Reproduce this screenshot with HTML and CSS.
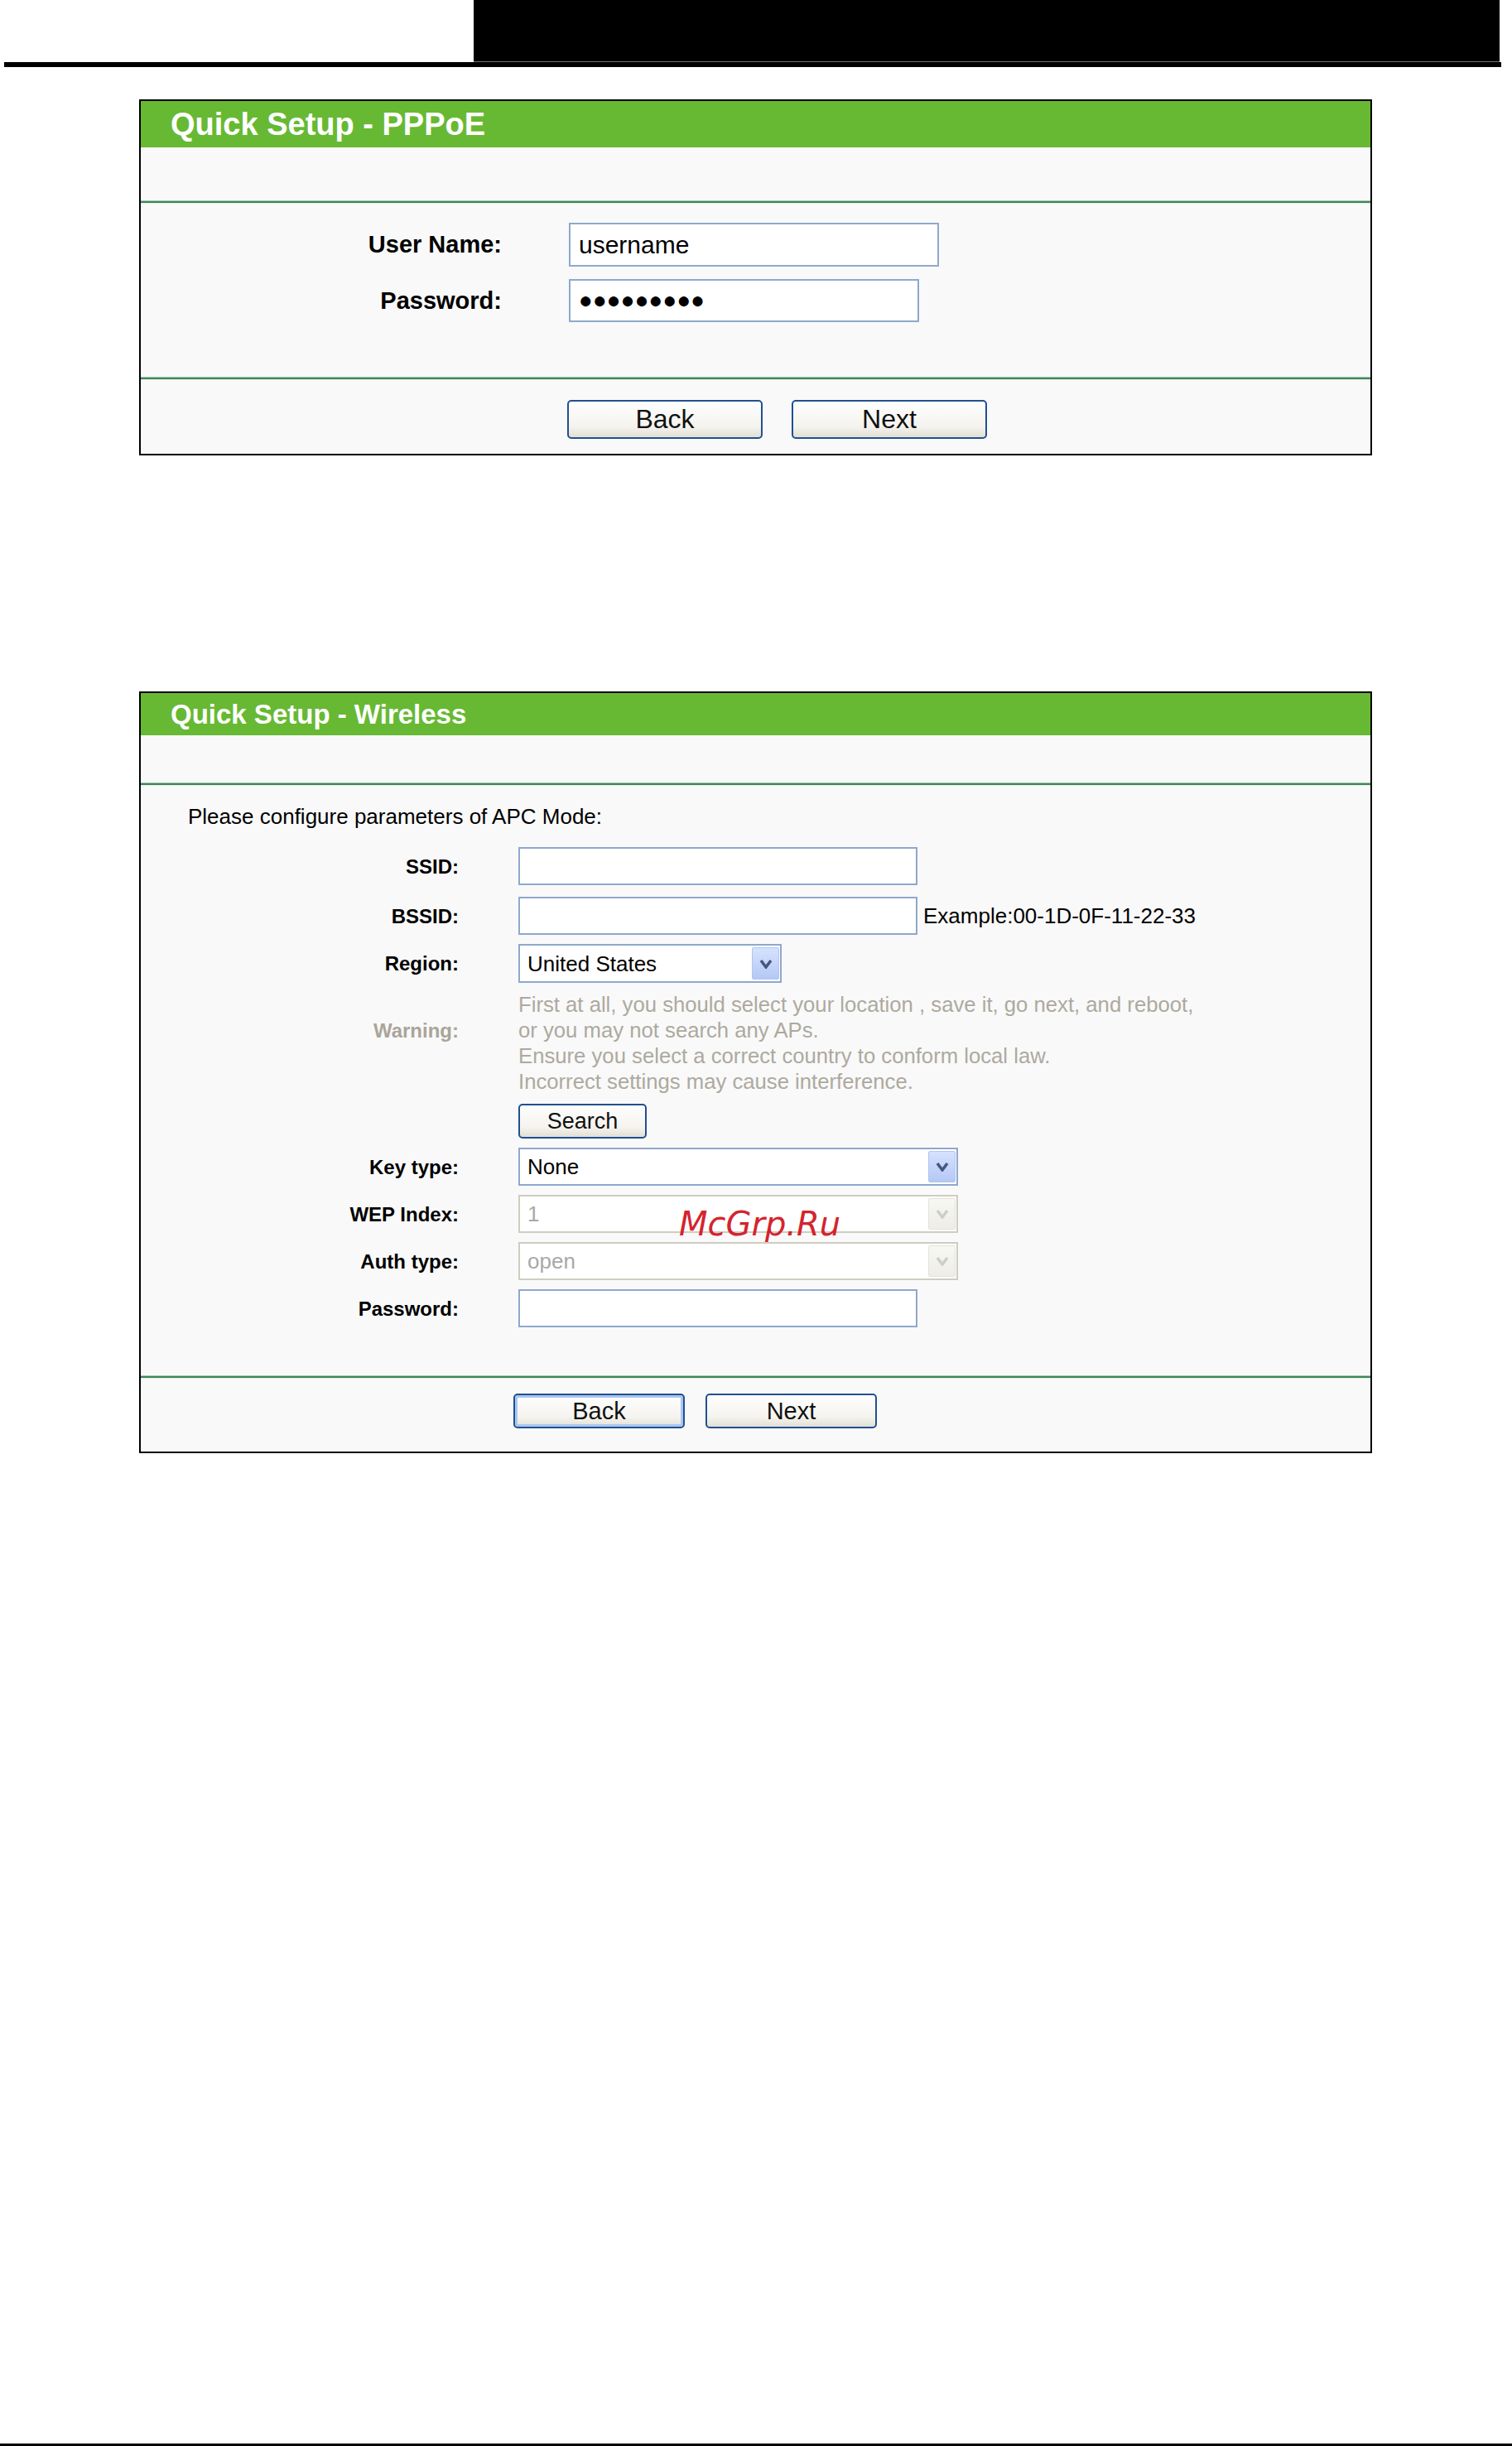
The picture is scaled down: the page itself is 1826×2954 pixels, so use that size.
FILE: index.html
```html
<!DOCTYPE html>
<html>
<head>
<meta charset="UTF-8">
<title>Quick Setup</title>
<link rel="stylesheet" href="styles.css">
</head>
<body>
<div class="page">

	<div class="top">
		<div class="top-box"></div>
	</div>

	<!-- PPPoE -->
	<div class="panel panel-pppoe">
		<h2 class="head">Quick Setup - PPPoE</h2>
		<div class="blank"></div>
		<div class="rule"></div>
		<div class="body">
			<div class="row">
				<label class="lbl">User Name:</label>
				<input class="field field-user" type="text" value="username">
			</div>
			<div class="row">
				<label class="lbl">Password:</label>
				<input class="field field-pass" type="text" value="●●●●●●●●●" readonly>
			</div>
		</div>
		<div class="rule"></div>
		<div class="foot">
			<button class="btn">Back</button>
			<button class="btn">Next</button>
		</div>
	</div>

	<!-- Wireless -->
	<div class="panel panel-wl">
		<h2 class="head">Quick Setup - Wireless</h2>
		<div class="blank"></div>
		<div class="rule"></div>
		<div class="body">
			<p class="intro">Please configure parameters of APC Mode:</p>
			<div class="row">
				<label class="lbl">SSID:</label>
				<input class="field field-wide" type="text">
			</div>
			<div class="row row-bssid">
				<label class="lbl">BSSID:</label>
				<input class="field field-wide" type="text">
				<span class="hint">Example:00-1D-0F-11-22-33</span>
			</div>
			<div class="row">
				<label class="lbl">Region:</label>
				<div class="select select-region">
					<select><option>United States</option></select>
					<span class="arrow"><svg width="16" height="12" viewBox="0 0 16 12"><polyline points="2,2 8,10 14,2" fill="none" stroke="#46587f" stroke-width="3.5"/></svg></span>
				</div>
			</div>
			<div class="row row-warn">
				<label class="lbl lbl-warn">Warning:</label>
				<div class="warn">
					First at all, you should select your location , save it, go next, and reboot,<br>
					or you may not search any APs.<br>
					Ensure you select a correct country to conform local law.<br>
					Incorrect settings may cause interference.
				</div>
			</div>
			<div class="row">
				<span class="lbl"></span>
				<button class="btn btn-search">Search</button>
			</div>
			<div class="row">
				<label class="lbl">Key type:</label>
				<div class="select">
					<select><option>None</option></select>
					<span class="arrow"><svg width="16" height="12" viewBox="0 0 16 12"><polyline points="2,2 8,10 14,2" fill="none" stroke="#46587f" stroke-width="3.5"/></svg></span>
				</div>
			</div>
			<div class="row">
				<label class="lbl">WEP Index:</label>
				<div class="select is-off">
					<select disabled><option>1</option></select>
					<span class="arrow"><svg width="16" height="12" viewBox="0 0 16 12"><polyline points="2,2 8,10 14,2" fill="none" stroke="#cdcdcd" stroke-width="3.5"/></svg></span>
				</div>
			</div>
			<div class="row">
				<label class="lbl">Auth type:</label>
				<div class="select is-off">
					<select disabled><option>open</option></select>
					<span class="arrow"><svg width="16" height="12" viewBox="0 0 16 12"><polyline points="2,2 8,10 14,2" fill="none" stroke="#cdcdcd" stroke-width="3.5"/></svg></span>
				</div>
			</div>
			<div class="row">
				<label class="lbl">Password:</label>
				<input class="field field-wide" type="text">
			</div>
		</div>
		<div class="rule"></div>
		<div class="foot">
			<button class="btn is-default">Back</button>
			<button class="btn">Next</button>
		</div>
	</div>

	<div class="page-end"></div>

	<div class="stamp">McGrp.Ru</div>
</div>
</body>
</html>
```

FILE: styles.css
```css
body {
  margin: 0;
  background: #fff;
  font-family: "Liberation Sans", Arial, sans-serif;
}
.page {
  position: relative;
  height: 2954px;
  display: flex;
  flex-direction: column;
}

/* top bar */
.top {
  display: flex;
  margin-left: 5px;
  width: 1808px;
  border-bottom: 6px solid #000;
}
.top-box {
  margin-left: 567px;
  width: 1239px;
  height: 74px;
  background: #000;
  border-bottom: 1px solid #6f6f6f;
}
.page-end {
  margin-top: auto;
  height: 3px;
  background: #000;
}

/* panels */
.panel {
  width: 1485px;
  margin-left: 168px;
  border: 2px solid #000;
  background: #f9f9f9;
}
.panel-pppoe { margin-top: 39px; }
.panel-wl { margin-top: 285px; }

.head {
  margin: 0;
  display: flex;
  align-items: center;
  padding-left: 36px;
  background: #67b934;
  color: #fff;
  font-weight: bold;
}
.panel-pppoe .head { height: 56px; font-size: 38px; }
.panel-wl .head { height: 51px; font-size: 33px; }

.panel-pppoe .blank { height: 64px; }
.panel-wl .blank { height: 57px; }

.rule {
  height: 2px;
  background: #3d8858;
  border-top: 1px solid #a3c8ae;
  box-shadow: 0 1px 0 #e2ece6;
}

.row {
  display: flex;
  align-items: center;
}
.lbl {
  flex: none;
  text-align: right;
  font-weight: bold;
  color: #000;
}

.field {
  box-sizing: border-box;
  border: 2px solid #8fa8cc;
  background: #fff;
  font-family: "Liberation Sans", Arial, sans-serif;
  color: #000;
  outline: none;
}

/* pppoe body */
.panel-pppoe .body {
  display: flex;
  flex-direction: column;
  gap: 15px;
  padding: 24px 0 66px;
}
.panel-pppoe .lbl {
  width: 436px;
  margin-right: 81px;
  font-size: 29px;
}
.panel-pppoe .field {
  height: 53px;
  padding: 0 10px;
  font-size: 30px;
}
.field-user { width: 447px; }
.field-pass {
  width: 423px;
  height: 52px !important;
  font-size: 28px !important;
}

/* wireless body */
.panel-wl .body {
  display: flex;
  flex-direction: column;
  gap: 11px;
  padding: 23px 0 58px;
  font-size: 26px;
  line-height: 31px;
}
.intro {
  margin: 0 0 10px;
  padding-left: 57px;
  color: #000;
}
.panel-wl .lbl {
  width: 384px;
  margin-right: 72px;
  font-size: 24px;
  line-height: 31px;
}
.panel-wl .field {
  height: 46px;
  padding: 0 9px;
  font-size: 26px;
}
.field-wide { width: 482px; }
.row-bssid { margin-top: 3px; }
.hint {
  margin-left: 7px;
  font-size: 26px;
  color: #000;
}

.row-warn { align-items: flex-start; }
.lbl-warn {
  padding-top: 31px;
  color: #a9a599 !important;
}
.warn {
  color: #ada99f;
  font-size: 25.7px;
  white-space: nowrap;
}

/* selects */
.select {
  position: relative;
  width: 531px;
  height: 46px;
}
.select-region {
  width: 318px;
  height: 47px;
}
.select select {
  appearance: none;
  -webkit-appearance: none;
  box-sizing: border-box;
  width: 100%;
  height: 100%;
  margin: 0;
  padding: 0 0 0 9px;
  border: 2px solid #8fa8cc;
  border-radius: 0;
  background: #fff;
  color: #000;
  font-family: "Liberation Sans", Arial, sans-serif;
  font-size: 26px;
  opacity: 1;
}
.select .arrow {
  position: absolute;
  top: 4px;
  bottom: 4px;
  right: 3px;
  width: 33px;
  box-sizing: border-box;
  display: flex;
  align-items: center;
  justify-content: center;
  border: 1px solid #b3c5ee;
  border-radius: 2px;
  background: linear-gradient(#d6e2fd, #b4c8f6);
  pointer-events: none;
}
.select.is-off select {
  border-color: #cfcdc0;
  color: #a8a8a8;
  background: #fff;
}
.select.is-off .arrow {
  border-color: #e3e2db;
  background: linear-gradient(#f7f7f3, #eeede7);
}

/* buttons */
.btn {
  box-sizing: border-box;
  padding: 0;
  border: 2px solid #21508f;
  border-radius: 5px;
  background: linear-gradient(#fefefe, #f4f3ee 70%, #e2dfd4);
  color: #111;
  font-family: "Liberation Sans", Arial, sans-serif;
}
.btn.is-default {
  box-shadow: inset 0 0 0 3px #abc6f1;
}
.btn-search {
  width: 155px;
  height: 42px;
  font-size: 27px;
}

.foot {
  display: flex;
}
.panel-pppoe .foot {
  gap: 35px;
  padding: 25px 0 18px 515px;
}
.panel-pppoe .foot .btn {
  width: 236px;
  height: 47px;
  font-size: 32px;
}
.panel-wl .foot {
  gap: 25px;
  padding: 19px 0 28px 450px;
}
.panel-wl .foot .btn {
  width: 207px;
  height: 42px;
  font-size: 29px;
}

/* watermark over the form */
.stamp {
  position: absolute;
  left: 820px;
  top: 1458px;
  font-family: "DejaVu Sans", sans-serif;
  font-style: italic;
  font-size: 40px;
  line-height: 1;
  color: #d5232d;
}
```
